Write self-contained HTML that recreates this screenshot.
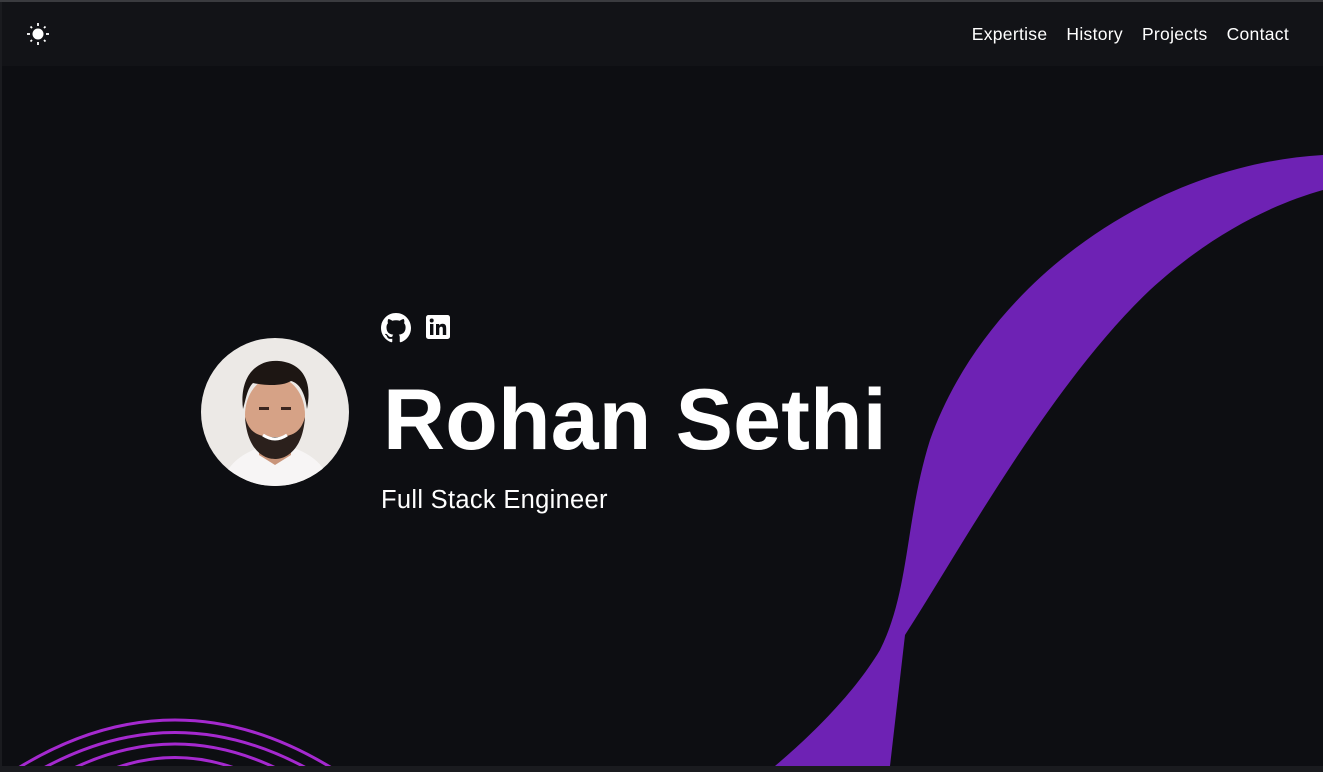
<!DOCTYPE html>
<html><head><meta charset="utf-8"><style>
*{margin:0;padding:0;box-sizing:border-box}
html,body{width:1323px;height:772px;overflow:hidden;background:#1a1b1f;font-family:"Liberation Sans",sans-serif;color:#fff}
.frame{position:absolute;left:2px;top:2px;width:1321px;height:764px;background:#0d0e12;overflow:hidden}
.top{position:absolute;left:0;top:0;width:1323px;height:2px;background:#3a3b3f}
nav{position:absolute;left:0;top:0;width:1321px;height:64px;background:#121317}
.links{position:absolute;right:34px;top:22px;font-size:17.5px;letter-spacing:0.3px}
.links span{margin-left:19px}
h1{position:absolute;left:381px;top:368px;font-size:86px;font-weight:bold;line-height:100px;letter-spacing:0.2px}
.sub{position:absolute;left:379px;top:484px;font-size:25.5px;letter-spacing:0.3px}
</style></head><body>
<div class="top"></div>
<div class="frame">
<nav>
<svg style="position:absolute;left:24px;top:20px" width="24" height="24" viewBox="0 0 24 24" fill="#fff" stroke="#fff">
<circle cx="12" cy="12" r="5.5" stroke="none"/>
<g stroke-width="1.8"><line x1="12" y1="1" x2="12" y2="4"/><line x1="12" y1="20" x2="12" y2="23"/><line x1="1" y1="12" x2="4" y2="12"/><line x1="20" y1="12" x2="23" y2="12"/><line x1="4.5" y1="4.5" x2="6" y2="6"/><line x1="18" y1="18" x2="19.5" y2="19.5"/><line x1="4.5" y1="19.5" x2="6" y2="18"/><line x1="18" y1="6" x2="19.5" y2="4.5"/></g></svg>
<div class="links"><span>Expertise</span><span>History</span><span>Projects</span><span>Contact</span></div>
</nav>
<svg style="position:absolute;left:-2px;top:-2px" width="1323" height="772" viewBox="0 0 1323 772">
<path d="M1323,155 C1150,165 985,285 930,440 C905,520 910,590 880,650 C850,700 800,745 775,766 L890,766 L905,635 C960,550 1050,385 1150,290 C1210,235 1270,205 1323,190 Z" fill="#6e22b4"/>
<g fill="none" stroke="#a529cf" stroke-width="3">
<path d="M15,770 Q175,670 335,770"/>
<path d="M40,770 Q175,695 310,770"/>
<path d="M70,770 Q175,718 280,770"/>
<path d="M110,770 Q175,745 240,770"/>
</g>
</svg>
<svg style="position:absolute;left:378px;top:311px" width="32" height="30" viewBox="0 0 16 16" fill="#fff"><path d="M8 0C3.580 0 0 3.58 0 8c0 3.54 2.29 6.53 5.47 7.590.4.07.55-.17.55-.38 0-.19-.01-.82-.01-1.49-2.010.37-2.53-.49-2.69-.94-.09-.23-.48-.94-.82-1.13-.28-.15-.68-.52-.01-.53.63-.01 1.08.58 1.230.82.72 1.21 1.87.87 2.330.66.07-.52.28-.87.51-1.07-1.78-.2-3.64-.89-3.64-3.95 0-.87.31-1.590.82-2.15-.08-.2-.36-1.020.08-2.12 0 0 .67-.21 2.200.82.64-.18 1.32-.27 2-.27.68 0 1.36.09 2 .27 1.53-1.04 2.2-.82 2.2-.82.44 1.1.16 1.92.08 2.12.51.56.82 1.27.82 2.15 0 3.07-1.87 3.75-3.65 3.95.29.25.54.73.54 1.48 0 1.07-.01 1.93-.01 2.2 0 .21.15.46.55.38A8.013 8.013 0 0016 8c0-4.42-3.58-8-8-8z"/></svg>
<svg style="position:absolute;left:424px;top:313px" width="24" height="24" viewBox="0 0 24 24"><rect x="0" y="0" width="24" height="24" rx="2.5" fill="#fff"/><rect x="4" y="9" width="3.4" height="11" fill="#0d0e12"/><circle cx="5.7" cy="5.5" r="2" fill="#0d0e12"/><path d="M10 9h3.2v1.6c.6-1.1 1.8-1.8 3.4-1.8 3 0 3.6 2 3.6 4.6V20h-3.4v-5.6c0-1.4-.1-2.6-1.6-2.6s-1.9 1.2-1.9 2.5V20H10z" fill="#0d0e12"/></svg>
<svg style="position:absolute;left:199px;top:335px" width="148" height="150" viewBox="0 0 148 150">
<defs><clipPath id="c"><circle cx="74" cy="75" r="74"/></clipPath></defs>
<g clip-path="url(#c)">
<rect width="148" height="150" fill="#ece9e6"/>
<path d="M20,150 C25,125 45,115 60,110 L90,110 C105,115 125,125 130,150Z" fill="#f7f5f5"/>
<path d="M58,100 L58,118 L74,128 L90,118 L90,100Z" fill="#c9957a"/>
<ellipse cx="74" cy="78" rx="30" ry="38" fill="#d6a286"/>
<path d="M44,80 C46,112 62,122 74,122 C86,122 102,112 104,80 C100,95 92,100 74,100 C56,100 48,95 44,80Z" fill="#2b201c"/>
<path d="M42,72 C38,40 55,22 78,24 C100,26 112,42 106,72 C104,55 98,46 90,44 C80,50 62,48 52,46 C46,52 45,62 42,72Z" fill="#1d1613"/>
<rect x="58" y="70" width="10" height="3" fill="#3a2620"/><rect x="80" y="70" width="10" height="3" fill="#3a2620"/>
<path d="M62,98 Q74,106 86,98" stroke="#fff" stroke-width="3" fill="none"/>
</g></svg>
<h1>Rohan Sethi</h1>
<div class="sub">Full Stack Engineer</div>
</div>
</body></html>
